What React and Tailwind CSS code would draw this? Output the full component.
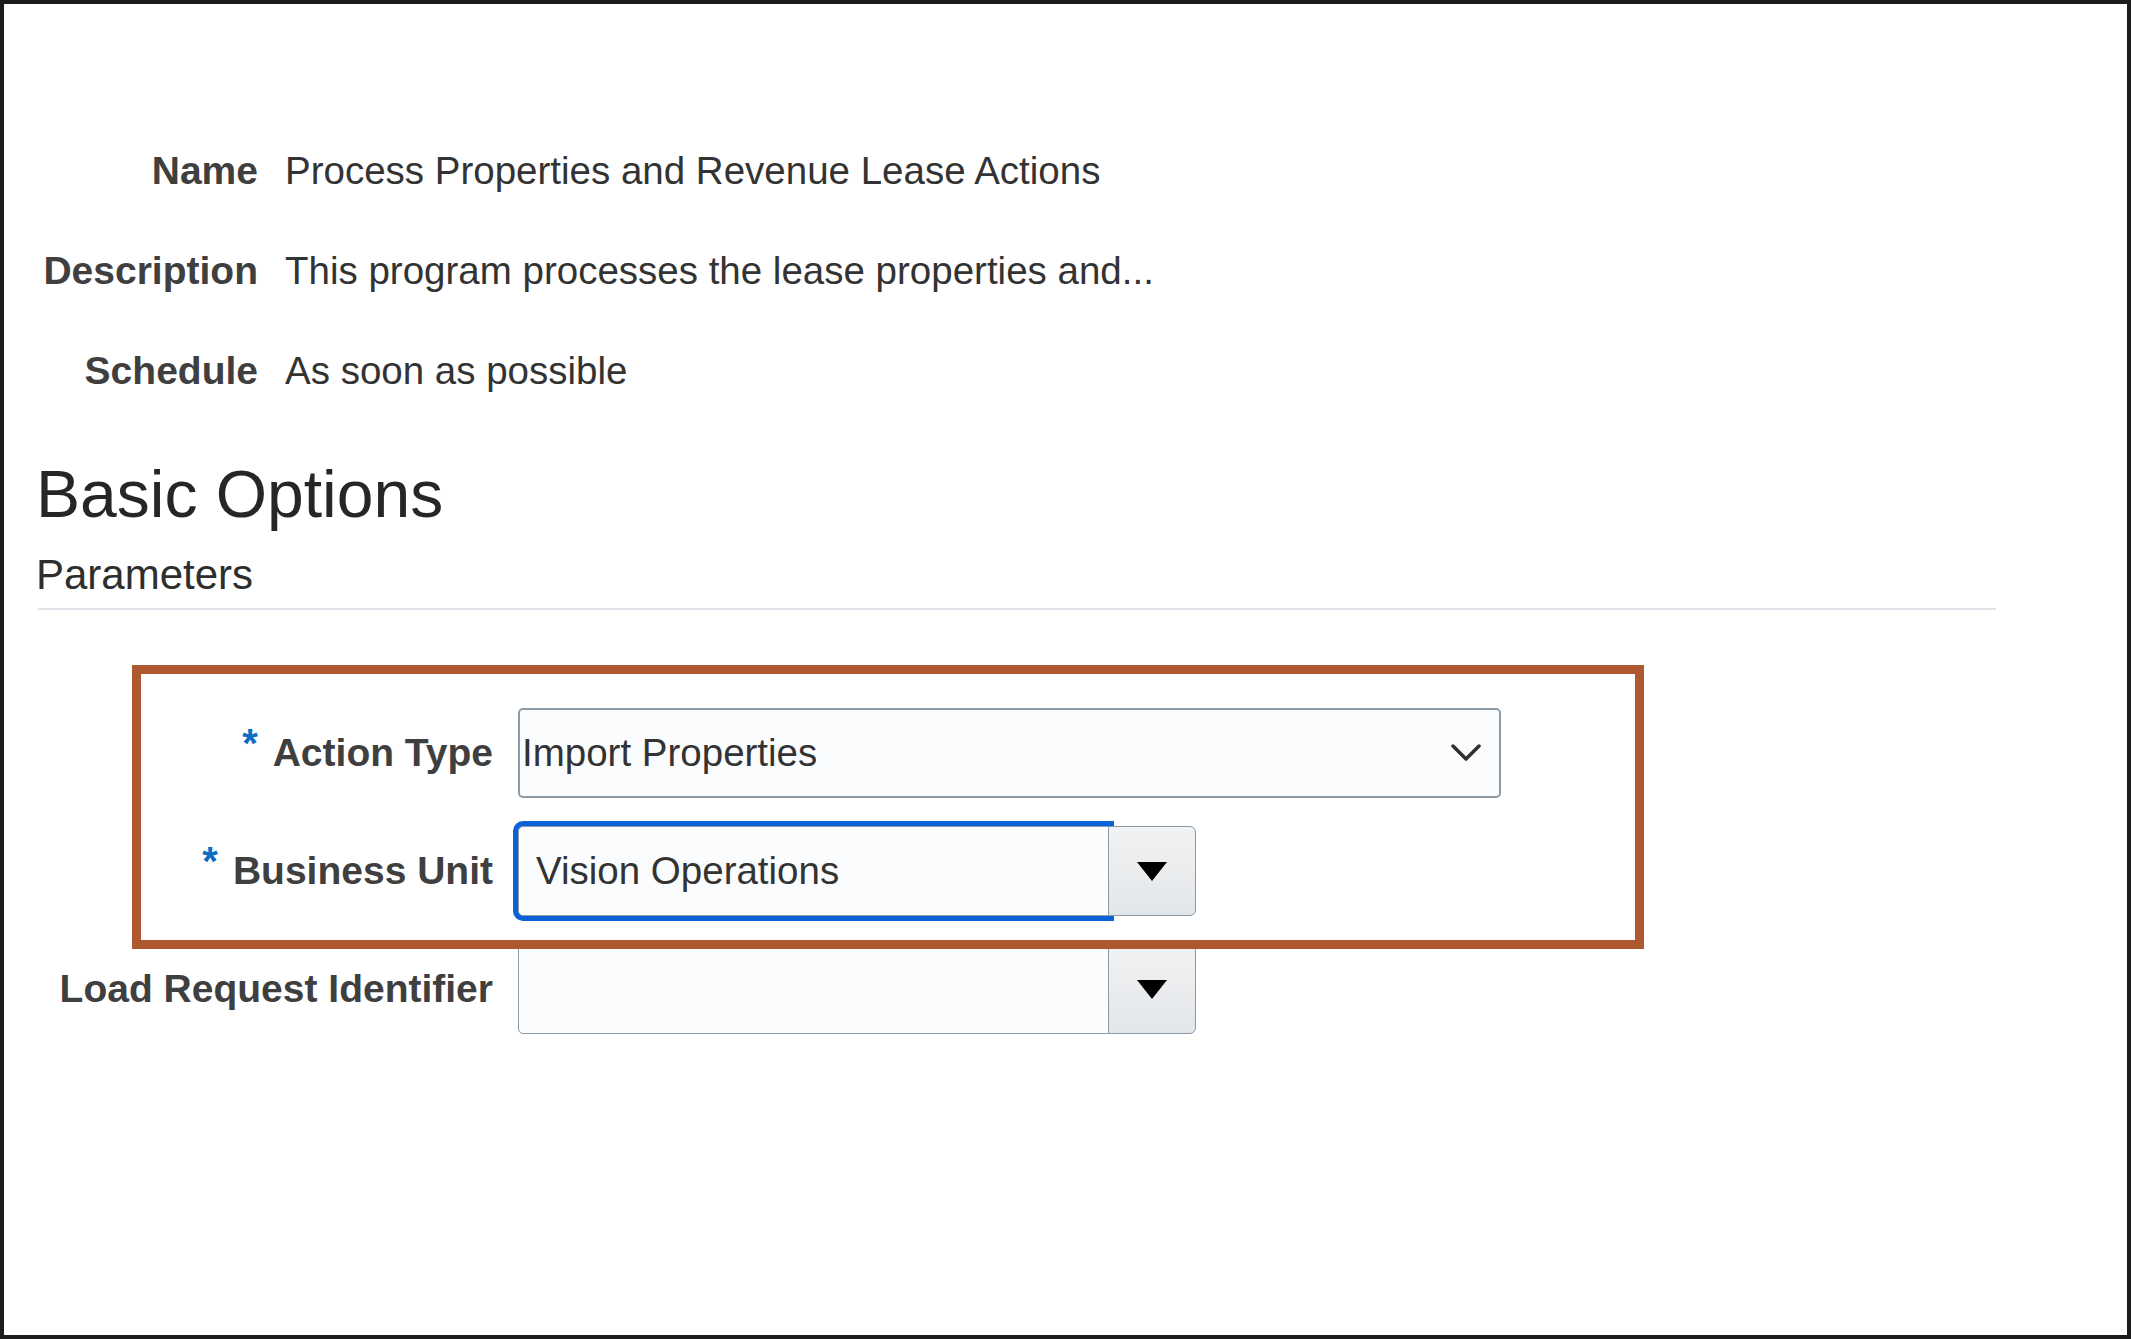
import { useState } from "react";

function Chevron() {
  return (
    <svg width="30" height="18" viewBox="0 0 30 18" fill="none">
      <polyline
        points="2,2 15,15 28,2"
        stroke="#2f2f2f"
        strokeWidth="3.5"
        strokeLinecap="round"
        strokeLinejoin="round"
      />
    </svg>
  );
}

function Triangle() {
  return (
    <svg width="32" height="20" viewBox="0 0 32 20">
      <polygon points="1,1 31,1 16,20" fill="#000000" />
    </svg>
  );
}

function Label({ text, required }) {
  return (
    <div className="flex items-center justify-end w-[457px] shrink-0 font-bold text-[39px] text-[#3f3f3f]">
      {required && (
        <span className="relative -top-[10px] mr-[15px] text-[40px] leading-none text-[#0a6cc2]">
          *
        </span>
      )}
      <span>{text}</span>
    </div>
  );
}

function ListInput({ value, focused }) {
  return (
    <div className="flex h-[90px]">
      <div
        className={
          focused
            ? "flex items-center w-[591px] h-full pl-[17px] bg-[#fbfcfd] border border-[#8d9ba6] rounded-l-[5px] shadow-[0_0_0_5px_#0a62d6] text-[38.5px] text-[#333333]"
            : "flex items-center w-[591px] h-full pl-[17px] bg-[#fbfcfd] border border-[#8d9ba6] rounded-l-[5px] text-[38.5px] text-[#333333]"
        }
      >
        {value}
      </div>
      <button className="relative z-10 flex items-center justify-center w-[88px] h-full -ml-px border border-[#8a9aa8] rounded-r-[6px] bg-gradient-to-b from-[#f1f2f3] to-[#e3e6e9]">
        <Triangle />
      </button>
    </div>
  );
}

function App() {
  const [actionType] = useState("Import Properties");

  return (
    <div
      className="relative w-[2131px] h-[1339px] bg-white border-4 border-[#1c1c1c] overflow-hidden"
      style={{ fontFamily: '"Liberation Sans", Arial, sans-serif' }}
    >
      <div className="pl-[32px] pt-[148px]">

        {/* header info */}
        <div className="flex flex-col gap-[62px] text-[38.5px] leading-[38px]">
          <div className="flex">
            <div className="w-[222px] text-right font-bold text-[39px] text-[#3f3f3f]">Name</div>
            <div className="ml-[27px] text-[#333333]">Process Properties and Revenue Lease Actions</div>
          </div>
          <div className="flex">
            <div className="w-[222px] text-right font-bold text-[39px] text-[#3f3f3f]">Description</div>
            <div className="ml-[27px] text-[#333333]">This program processes the lease properties and...</div>
          </div>
          <div className="flex">
            <div className="w-[222px] text-right font-bold text-[39px] text-[#3f3f3f]">Schedule</div>
            <div className="ml-[27px] text-[#333333]">As soon as possible</div>
          </div>
        </div>

        <h1 className="mt-[71px] text-[66px] leading-[66px] text-[#262626]">Basic Options</h1>
        <h2 className="mt-[27px] text-[42px] leading-[42px] text-[#2e2e2e]">Parameters</h2>
        <div className="mt-[12px] ml-[2px] w-[1958px] h-[2px] bg-[#dfe4ea]" />

        {/* parameters */}
        <div className="mt-[98px] flex flex-col gap-[28px]">
          <div className="flex items-center">
            <Label text="Action Type" required />
            <div className="ml-[25px] flex items-center justify-between w-[983px] h-[90px] pl-[2px] pr-[18px] bg-[#fbfcfd] border-2 border-[#8d9ba6] rounded-[5px] text-[38.5px] text-[#333333]">
              <span>{actionType}</span>
              <Chevron />
            </div>
          </div>
          <div className="flex items-center">
            <Label text="Business Unit" required />
            <div className="ml-[25px]">
              <ListInput value="Vision Operations" focused />
            </div>
          </div>
          <div className="flex items-center">
            <Label text="Load Request Identifier" />
            <div className="ml-[25px]">
              <ListInput value="" />
            </div>
          </div>
        </div>
      </div>

      {/* highlight overlay */}
      <div className="absolute left-[128px] top-[661px] w-[1512px] h-[284px] border-[9px] border-[#ad582e] pointer-events-none z-20" />
    </div>
  );
}

export default App;
